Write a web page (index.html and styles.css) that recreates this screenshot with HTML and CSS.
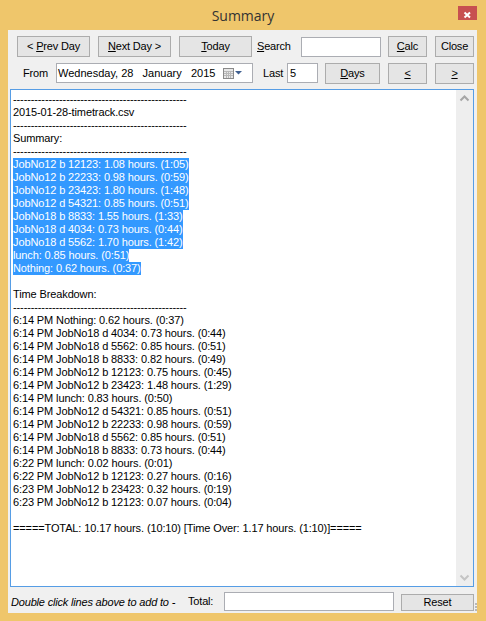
FILE: index.html
```html
<!DOCTYPE html>
<html>
<head>
<meta charset="utf-8">
<title>Summary</title>
<link rel="stylesheet" href="styles.css">
</head>
<body>
<div class="window">
  <div class="titlebar">
    <span></span>
    <span class="title">Summary</span>
    <span class="close-btn"><svg width="19" height="14" viewBox="0 0 19 14"><path d="M6.5 6.5 L12 11.5 M12 6.5 L6.5 11.5" stroke="#fff" stroke-width="2" fill="none"/></svg></span>
  </div>
  <div class="client">
    <div class="row row1">
      <div class="btn w73"><span>&lt; <u>P</u>rev Day</span></div>
      <div class="btn w73 ml8"><span><u>N</u>ext Day &gt;</span></div>
      <div class="btn w73 ml8"><span><u>T</u>oday</span></div>
      <span class="label search-label"><u>S</u>earch</span>
      <div class="field search-field"></div>
      <div class="btn w39 ml7"><span><u>C</u>alc</span></div>
      <div class="btn w39 ml8"><span>Close</span></div>
    </div>
    <div class="row row2">
      <span class="label from-label">From</span>
      <div class="field date-field">
        <span class="date-text">Wednesday, 28   January   2015</span>
        <svg class="cal-icon" width="22" height="12" viewBox="0 0 22 12">
          <rect x="0.5" y="0.5" width="10" height="10" fill="#e8e8e8" stroke="#8a8a8a"/>
          <path d="M1 3.5 H10 M1 5.5 H10 M1 7.5 H10 M3.5 3 V10 M5.5 3 V10 M7.5 3 V10" stroke="#b8b8b8" stroke-width="1"/>
          <path d="M12 3 H19 L15.5 6.5 Z" fill="#3f5f8f"/>
        </svg>
      </div>
      <span class="label last-label">Last</span>
      <div class="field last-field">5</div>
      <div class="btn w55 ml7"><span><u>D</u>ays</span></div>
      <div class="btn w39 ml8"><span><u>&lt;</u></span></div>
      <div class="btn w39 ml8"><span><u>&gt;</u></span></div>
    </div>
    <div class="textbox">
      <div class="text-content">
        <div class="line">-------------------------------------------------</div>
        <div class="line">2015-01-28-timetrack.csv</div>
        <div class="line">-------------------------------------------------</div>
        <div class="line">Summary:</div>
        <div class="line">-------------------------------------------------</div>
        <div class="line"><span class="sel">JobNo12 b 12123: 1.08 hours. (1:05)</span></div>
        <div class="line"><span class="sel">JobNo12 b 22233: 0.98 hours. (0:59)</span></div>
        <div class="line"><span class="sel">JobNo12 b 23423: 1.80 hours. (1:48)</span></div>
        <div class="line"><span class="sel">JobNo12 d 54321: 0.85 hours. (0:51)</span></div>
        <div class="line"><span class="sel">JobNo18 b 8833: 1.55 hours. (1:33)</span></div>
        <div class="line"><span class="sel">JobNo18 d 4034: 0.73 hours. (0:44)</span></div>
        <div class="line"><span class="sel">JobNo18 d 5562: 1.70 hours. (1:42)</span></div>
        <div class="line"><span class="sel">lunch: 0.85 hours. (0:51)</span></div>
        <div class="line"><span class="sel">Nothing: 0.62 hours. (0:37)</span></div>
        <div class="line"> </div>
        <div class="line">Time Breakdown:</div>
        <div class="line">-------------------------------------------------</div>
        <div class="line">6:14 PM Nothing: 0.62 hours. (0:37)</div>
        <div class="line">6:14 PM JobNo18 d 4034: 0.73 hours. (0:44)</div>
        <div class="line">6:14 PM JobNo18 d 5562: 0.85 hours. (0:51)</div>
        <div class="line">6:14 PM JobNo18 b 8833: 0.82 hours. (0:49)</div>
        <div class="line">6:14 PM JobNo12 b 12123: 0.75 hours. (0:45)</div>
        <div class="line">6:14 PM JobNo12 b 23423: 1.48 hours. (1:29)</div>
        <div class="line">6:14 PM lunch: 0.83 hours. (0:50)</div>
        <div class="line">6:14 PM JobNo12 d 54321: 0.85 hours. (0:51)</div>
        <div class="line">6:14 PM JobNo12 b 22233: 0.98 hours. (0:59)</div>
        <div class="line">6:14 PM JobNo18 d 5562: 0.85 hours. (0:51)</div>
        <div class="line">6:14 PM JobNo18 b 8833: 0.73 hours. (0:44)</div>
        <div class="line">6:22 PM lunch: 0.02 hours. (0:01)</div>
        <div class="line">6:22 PM JobNo12 b 12123: 0.27 hours. (0:16)</div>
        <div class="line">6:23 PM JobNo12 b 23423: 0.32 hours. (0:19)</div>
        <div class="line">6:23 PM JobNo12 b 12123: 0.07 hours. (0:04)</div>
        <div class="line"> </div>
        <div class="line">=====TOTAL: 10.17 hours. (10:10) [Time Over: 1.17 hours. (1:10)]=====</div>
      </div>
      <div class="scrollbar">
        <svg width="17" height="17" viewBox="0 0 17 17"><path d="M4.5 10.5 L8.5 6.5 L12.5 10.5" stroke="#a6a6a6" stroke-width="2" fill="none"/></svg>
        <svg width="17" height="17" viewBox="0 0 17 17"><path d="M4.5 6.5 L8.5 10.5 L12.5 6.5" stroke="#c4c4c4" stroke-width="2" fill="none"/></svg>
      </div>
    </div>
    <div class="row bottom">
      <span class="hint">Double click lines above to add to -</span>
      <span class="label total-label">Total:</span>
      <div class="field total-field"></div>
      <div class="btn w73 ml7 reset"><span>Reset</span></div>
      <svg class="grip" width="3" height="10" viewBox="0 0 3 10"><rect x="1" y="1" width="2" height="2" fill="#b8b8b8"/><rect x="1" y="4" width="2" height="2" fill="#b8b8b8"/><rect x="1" y="7" width="2" height="2" fill="#b8b8b8"/></svg>
    </div>
  </div>
</div>
</body>
</html>
```

FILE: styles.css
```css
* { box-sizing: border-box; }
html, body { margin: 0; padding: 0; }
body {
  width: 486px;
  height: 621px;
  overflow: hidden;
  font-family: "Liberation Sans", Arial, sans-serif;
  font-size: 11px;
  letter-spacing: -0.18px;
  color: #000;
}
.window {
  width: 486px;
  height: 621px;
  background: #efc66b;
  display: flex;
  flex-direction: column;
}
.titlebar {
  height: 30px;
  display: grid;
  grid-template-columns: 1fr auto 1fr;
  align-items: start;
}
.title {
  font-family: "Open Sans", "Noto Sans", sans-serif;
  font-size: 14px;
  letter-spacing: 0;
  color: #333;
  line-height: 20px;
  padding-top: 6px;
}
.close-btn {
  justify-self: end;
  margin-top: 6px;
  margin-right: 9px;
  width: 19px;
  height: 14px;
  background: #c75050;
  display: block;
}
.close-btn svg { display: block; }
.client {
  margin: 0 9px 8px 8px;
  height: 583px;
  background: #f0f0f0;
  display: flex;
  flex-direction: column;
}
.row { display: flex; align-items: center; }
.row > * { flex-shrink: 0; }
.row1 { padding: 6px 0 0 9px; height: 27px; align-items: flex-start; }
.row2 { padding: 6px 0 0 15px; height: 27px; align-items: flex-start; }
.btn {
  height: 21px;
  background: #e5e5e5;
  border: 1px solid #acacac;
  display: flex;
  align-items: center;
  justify-content: center;
  line-height: 13px;
  color: #000;
  white-space: pre;
}
.w73 { width: 73px; }
.w39 { width: 39px; }
.w55 { width: 55px; }
.ml7 { margin-left: 7px; }
.ml8 { margin-left: 8px; }
.label { line-height: 21px; }
.search-label { margin-left: 5px; width: 44px; }
.field {
  background: #fff;
  border: 1px solid #abadb3;
  height: 20px;
}
.search-field { width: 80px; margin-top: 1px; }
.from-label { width: 33px; line-height: 20px; }
.date-field {
  width: 197px;
  display: flex;
  align-items: center;
  padding-left: 1px;
}
.date-text { white-space: pre; flex: 1; line-height: 18px; letter-spacing: 0; }
.cal-icon { display: block; margin-right: 7px; margin-top: 1px; }
.last-label { margin-left: 10px; width: 24px; line-height: 20px; }
.last-field { width: 31px; line-height: 18px; padding-left: 2px; }
.textbox {
  margin: 5px 3px 0 2px;
  height: 498px;
  border: 1px solid #569de5;
  background: #fff;
  display: flex;
}
.text-content {
  flex: 1;
  padding: 3px 0 0 2px;
  line-height: 13px;
  overflow: hidden;
  letter-spacing: -0.12px;
}
.line { height: 13px; white-space: pre; }
.sel {
  display: inline-block;
  height: 13px;
  background: #3399ff;
  color: #fff;
  vertical-align: top;
}
.scrollbar {
  width: 17px;
  background: #eeeeee;
  display: flex;
  flex-direction: column;
  justify-content: space-between;
}
.scrollbar svg { display: block; }
.bottom {
  flex: 1;
  padding-left: 3px;
  padding-top: 3px;
}
.hint {
  font-style: italic;
  width: 177px;
  color: #000;
}
.total-label { width: 36px; }
.total-field { width: 170px; height: 19px; }
.reset { height: 17px; margin-top: 1px; }
.grip { display: block; margin-top: 10px; }
u { text-decoration: underline; text-underline-offset: 1px; }
```
